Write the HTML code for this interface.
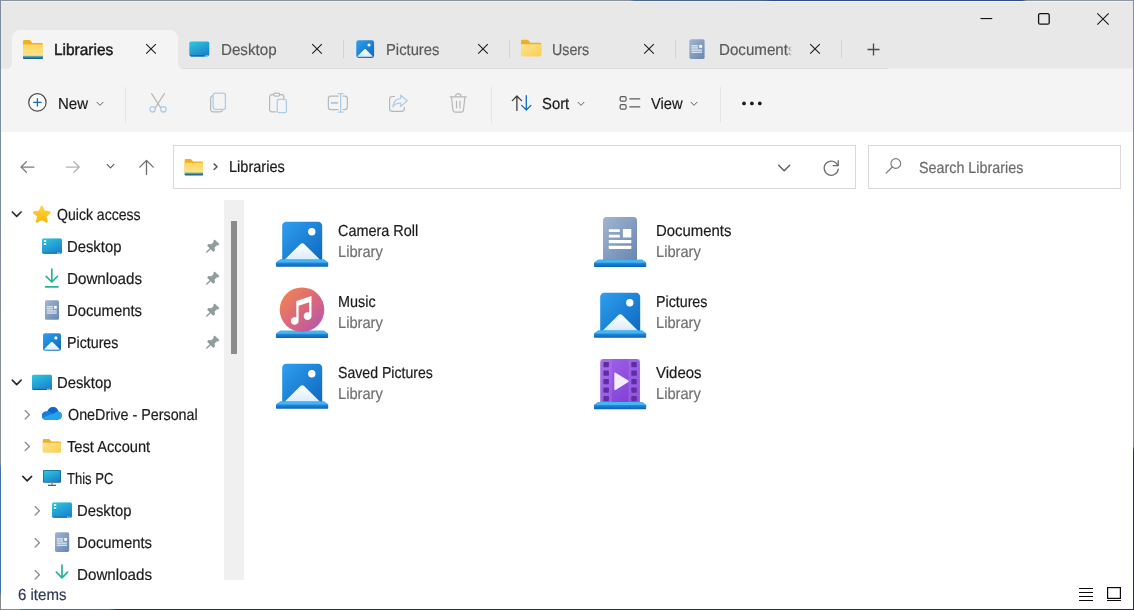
<!DOCTYPE html>
<html>
<head>
<meta charset="utf-8">
<title>Libraries</title>
<style>
*{box-sizing:border-box;margin:0;padding:0}
html,body{width:1134px;height:610px;overflow:hidden;background:#fff}
body{font-family:"Liberation Sans",sans-serif;color:#1b1b1b;position:relative;font-size:15px}
.abs{position:absolute}
svg{position:absolute;overflow:visible}
.t{position:absolute;white-space:nowrap;line-height:20px;transform-origin:0 50%;-webkit-text-stroke:0.200px currentColor;text-rendering:geometricPrecision}
.sep{position:absolute;width:1px;background:#d8d8d8}
.box{position:absolute;border:1px solid #d9d9d9;background:#fff}
</style>
</head>
<body>
<!-- defs -->
<svg width="0" height="0" style="left:0;top:0">
<defs>
<linearGradient id="gFold" x1="0" y1="0" x2="0" y2="1"><stop offset="0" stop-color="#ffd65c"/><stop offset="1" stop-color="#fbe391"/></linearGradient>
<linearGradient id="gFoldB" x1="0" y1="0" x2="1" y2="1"><stop offset="0" stop-color="#fde391"/><stop offset="1" stop-color="#fbce50"/></linearGradient>
<linearGradient id="gBase" x1="0" y1="0" x2="0" y2="1"><stop offset="0" stop-color="#8fc08a"/><stop offset="0.400" stop-color="#3a98b4"/><stop offset="0.750" stop-color="#1a64a2"/><stop offset="1" stop-color="#175c98"/></linearGradient>
<linearGradient id="gDesk" x1="0.200" y1="0" x2="0.800" y2="1"><stop offset="0" stop-color="#2fc3dc"/><stop offset="1" stop-color="#177fce"/></linearGradient>
<linearGradient id="gPic" x1="0" y1="0" x2="1" y2="1"><stop offset="0" stop-color="#2e9fee"/><stop offset="1" stop-color="#0e68bf"/></linearGradient>
<linearGradient id="gDoc" x1="0" y1="0" x2="1" y2="1"><stop offset="0" stop-color="#a2b5cf"/><stop offset="1" stop-color="#6686b4"/></linearGradient>
<linearGradient id="gLibBase" x1="0" y1="0" x2="0" y2="1"><stop offset="0.350" stop-color="#2390e2"/><stop offset="1" stop-color="#0c61ba"/></linearGradient>
<linearGradient id="gMus" x1="0" y1="0" x2="1" y2="1"><stop offset="0" stop-color="#f28a4a"/><stop offset="0.55" stop-color="#d9667e"/><stop offset="1" stop-color="#a855b8"/></linearGradient>
<linearGradient id="gVid" x1="0" y1="0" x2="1" y2="1"><stop offset="0" stop-color="#a465ee"/><stop offset="1" stop-color="#7a3ad0"/></linearGradient>
<linearGradient id="gMtn" x1="0" y1="0" x2="0" y2="1"><stop offset="0" stop-color="#ffffff"/><stop offset="1" stop-color="#d9ebfa"/></linearGradient>

</defs>
</svg>
<!-- chrome -->
<div class="abs" style="left:0;top:0;width:1134px;height:69px;background:#e8e8e8"></div>
<div class="abs" style="left:0;top:69px;width:1134px;height:63px;background:#f4f4f4"></div>
<div class="abs" style="left:888px;top:68px;width:246px;height:1px;background:#eeeeee"></div>
<div class="abs" style="left:178px;top:68px;width:710px;height:1px;background:#dcdcdc"></div>
<div class="abs" style="left:12px;top:30px;width:166px;height:39px;background:#f4f4f4;border-radius:8px 8px 0 0"></div>
<div class="abs" style="left:7px;top:64px;width:5px;height:5px;background:radial-gradient(circle at 0 0, rgba(244,244,244,0) 4.500px, #f4f4f4 5px)"></div>
<div class="abs" style="left:178px;top:64px;width:5px;height:5px;background:radial-gradient(circle at 100% 0, rgba(244,244,244,0) 4.500px, #f4f4f4 5px)"></div>
<!-- window controls -->



<!-- tabs -->
<span class="t" style="left:54.3px;top:41px;font-size:16px;color:#1a1a1a;transform:scaleX(0.9648);-webkit-text-stroke:0.450px #1a1a1a;">Libraries</span><span class="t" style="left:220.6px;top:41px;font-size:16px;color:#5a5a5a;transform:scaleX(0.9471);">Desktop</span><span class="t" style="left:386.4px;top:41px;font-size:16px;color:#5a5a5a;transform:scaleX(0.9239);">Pictures</span><span class="t" style="left:552.2px;top:41px;font-size:16px;color:#5a5a5a;transform:scaleX(0.8904);">Users</span><div class="abs" style="left:715px;top:38px;width:76.500px;height:24px;overflow:hidden;-webkit-mask-image:linear-gradient(90deg,#000 93%,transparent 100%);mask-image:linear-gradient(90deg,#000 93%,transparent 100%)"><span class="t" style="left:3.6px;top:3px;font-size:16px;color:#5a5a5a;transform:scaleX(0.9454);">Documents</span></div><div class="sep" style="left:343px;top:40px;height:18px;background:#d2d2d2"></div><div class="sep" style="left:509px;top:40px;height:18px;background:#d2d2d2"></div><div class="sep" style="left:675px;top:40px;height:18px;background:#d2d2d2"></div><div class="sep" style="left:841px;top:40px;height:18px;background:#d2d2d2"></div>
<!-- toolbar -->
<span class="t" style="left:58.2px;top:95px;font-size:16px;color:#1a1a1a;transform:scaleX(0.9370);">New</span><div class="sep" style="left:125px;top:87px;height:36px;background:#e4e4e4"></div><div class="sep" style="left:491px;top:87px;height:36px;background:#e4e4e4"></div><span class="t" style="left:541.8px;top:95px;font-size:16px;color:#1a1a1a;transform:scaleX(0.9269);">Sort</span><span class="t" style="left:650.6px;top:95px;font-size:16px;color:#1a1a1a;transform:scaleX(0.9189);">View</span><div class="sep" style="left:720px;top:87px;height:36px;background:#e4e4e4"></div>
<!-- address -->
<div class="box" style="left:173px;top:145px;width:683px;height:44px"></div><span class="t" style="left:229px;top:158px;font-size:16px;color:#1a1a1a;transform:scaleX(0.9094);">Libraries</span><div class="box" style="left:868px;top:145px;width:253px;height:44px"></div><span class="t" style="left:919px;top:159px;font-size:16px;color:#6b6b6b;transform:scaleX(0.8953);">Search Libraries</span>
<!-- sidebar -->
<span class="t" style="left:56.8px;top:206px;font-size:16px;color:#1b1b1b;transform:scaleX(0.8787);">Quick access</span><span class="t" style="left:67.4px;top:238px;font-size:16px;color:#1b1b1b;transform:scaleX(0.9267);">Desktop</span><span class="t" style="left:67.4px;top:270px;font-size:16px;color:#1b1b1b;transform:scaleX(0.9475);">Downloads</span><span class="t" style="left:67.4px;top:302px;font-size:16px;color:#1b1b1b;transform:scaleX(0.9268);">Documents</span><span class="t" style="left:67px;top:334px;font-size:16px;color:#1b1b1b;transform:scaleX(0.8893);">Pictures</span><span class="t" style="left:57.4px;top:374px;font-size:16px;color:#1b1b1b;transform:scaleX(0.9267);">Desktop</span><span class="t" style="left:67.7px;top:406px;font-size:16px;color:#1b1b1b;transform:scaleX(0.8948);">OneDrive - Personal</span><span class="t" style="left:67.3px;top:438px;font-size:16px;color:#1b1b1b;transform:scaleX(0.9171);">Test Account</span><span class="t" style="left:67.4px;top:470px;font-size:16px;color:#1b1b1b;transform:scaleX(0.8154);">This PC</span><span class="t" style="left:77.4px;top:502px;font-size:16px;color:#1b1b1b;transform:scaleX(0.9267);">Desktop</span><span class="t" style="left:77.4px;top:534px;font-size:16px;color:#1b1b1b;transform:scaleX(0.9268);">Documents</span><span class="t" style="left:77.4px;top:566px;font-size:16px;color:#1b1b1b;transform:scaleX(0.9475);">Downloads</span><div class="abs" style="left:224px;top:200px;width:20px;height:380px;background:#f0f0f0"></div><div class="abs" style="left:231px;top:221px;width:6px;height:133px;background:#8b8b8b"></div><div class="abs" style="left:0;top:580px;width:1134px;height:30px;background:#fff"></div>
<!-- content -->
<span class="t" style="left:338px;top:222px;font-size:16px;color:#1b1b1b;transform:scaleX(0.9019);">Camera Roll</span><span class="t" style="left:338px;top:243px;font-size:16px;color:#707070;transform:scaleX(0.9160);">Library</span><span class="t" style="left:337.7px;top:293px;font-size:16px;color:#1b1b1b;transform:scaleX(0.8999);">Music</span><span class="t" style="left:338px;top:314px;font-size:16px;color:#707070;transform:scaleX(0.9160);">Library</span><span class="t" style="left:338px;top:364px;font-size:16px;color:#1b1b1b;transform:scaleX(0.8810);">Saved Pictures</span><span class="t" style="left:338px;top:385px;font-size:16px;color:#707070;transform:scaleX(0.9160);">Library</span><span class="t" style="left:656px;top:222px;font-size:16px;color:#1b1b1b;transform:scaleX(0.9318);">Documents</span><span class="t" style="left:656.2px;top:243px;font-size:16px;color:#707070;transform:scaleX(0.9160);">Library</span><span class="t" style="left:656px;top:293px;font-size:16px;color:#1b1b1b;transform:scaleX(0.8893);">Pictures</span><span class="t" style="left:656.2px;top:314px;font-size:16px;color:#707070;transform:scaleX(0.9160);">Library</span><span class="t" style="left:656px;top:364px;font-size:16px;color:#1b1b1b;transform:scaleX(0.9375);">Videos</span><span class="t" style="left:656.2px;top:385px;font-size:16px;color:#707070;transform:scaleX(0.9160);">Library</span>
<!-- status -->
<span class="t" style="left:18px;top:586px;font-size:16px;color:#2f3b55;transform:scaleX(0.9384);">6 items</span>
<!-- icons -->
<svg style="left:0;top:0;pointer-events:none" width="1134" height="610" viewBox="0 0 1134 610">
<svg x="980.500" y="18" width="12" height="2" overflow="visible"><path d="M0 .55h11.800" stroke="#111" stroke-width="1.100"/></svg>
<svg x="1038" y="13" width="12" height="12" overflow="visible"><rect x=".6" y=".6" width="10.600" height="10.600" rx="1.500" fill="none" stroke="#111" stroke-width="1.300"/></svg>
<svg x="1097" y="13" width="12" height="12" overflow="visible"><path d="M.3.300l11.400 11.400M11.700.3L.3 11.700" stroke="#1a1a1a" stroke-width="1.100" fill="none"/></svg>
<svg x="23" y="40" width="20" height="19" overflow="visible" ><svg width="20" height="19" viewBox="0 0 20 19" preserveAspectRatio="none" overflow="visible"><path d="M0 1.600C0 .7.700 0 1.600 0h4.600c.5 0 1 .2 1.300.6L9.300 3H18.600c.8 0 1.400.6 1.400 1.400V16H0z" fill="#efb021"/>
 <path d="M0 4.400h20V16H0z" fill="url(#gFold)"/>
 <path d="M0 15.700h20v2.500c0 .4-.3.800-.8.800H.8c-.5 0-.8-.4-.8-.8z" fill="url(#gBase)"/></svg></svg>
<svg x="145.9" y="43.8" width="10.2" height="10.2" overflow="visible" ><svg width="10.2" height="10.2" viewBox="0 0 10 10" overflow="visible"><path d="M.3.300l9.400 9.400M9.700.3L.3 9.700" stroke="#1a1a1a" stroke-width="1.050" fill="none"/></svg></svg>
<svg x="189.3" y="41.4" width="20" height="15" overflow="visible" ><svg width="20" height="15" viewBox="0 0 20 15" preserveAspectRatio="none" overflow="visible"><rect x="0" y="0" width="20" height="15" rx="1.800" fill="url(#gDesk)"/><path d="M.3 13.900H15.200V15H1.800C1 15 .5 14.600.3 13.900z" fill="#0d639f"/><rect x="16.200" y="13.800" width="1" height="1.200" fill="#e8f4ff" opacity=".85"/><rect x="18" y="13.800" width="1" height="1.200" fill="#e8f4ff" opacity=".85"/></svg></svg>
<svg x="311.9" y="43.8" width="10.2" height="10.2" overflow="visible" ><svg width="10.2" height="10.2" viewBox="0 0 10 10" overflow="visible"><path d="M.3.300l9.400 9.400M9.700.3L.3 9.700" stroke="#1a1a1a" stroke-width="1.050" fill="none"/></svg></svg>
<svg x="356.3" y="40.3" width="17.8" height="17.6" overflow="visible" ><svg width="17.8" height="17.6" viewBox="0 0 18 18" preserveAspectRatio="none" overflow="visible"><rect x="0" y="0" width="18" height="18" rx="2.200" fill="url(#gPic)"/>
 <path d="M1.200 16.200 8 9.300c.5-.5 1.200-.5 1.700 0l6.900 6.900c-.2.400-.6.600-1.100.6H2.300c-.5 0-.9-.2-1.100-.6z" fill="url(#gMtn)"/>
 <circle cx="12.900" cy="4.800" r="1.600" fill="#fff"/></svg></svg>
<svg x="477.9" y="43.8" width="10.2" height="10.2" overflow="visible" ><svg width="10.2" height="10.2" viewBox="0 0 10 10" overflow="visible"><path d="M.3.300l9.400 9.400M9.700.3L.3 9.700" stroke="#1a1a1a" stroke-width="1.050" fill="none"/></svg></svg>
<svg x="521" y="39.8" width="20.2" height="16.6" overflow="visible" ><svg width="20.2" height="16.6" viewBox="0 0 20 17" preserveAspectRatio="none" overflow="visible"><path d="M0 1.600C0 .7.700 0 1.600 0h4.600c.5 0 1 .2 1.300.6L9.300 3H18.600c.8 0 1.400.6 1.400 1.400V15H0z" fill="#efb021"/>
 <path d="M0 4.500h20V15.600c0 .8-.6 1.400-1.400 1.400H1.400C.6 17 0 16.400 0 15.600z" fill="url(#gFoldB)"/></svg></svg>
<svg x="643.9" y="43.8" width="10.2" height="10.2" overflow="visible" ><svg width="10.2" height="10.2" viewBox="0 0 10 10" overflow="visible"><path d="M.3.300l9.400 9.400M9.700.3L.3 9.700" stroke="#1a1a1a" stroke-width="1.050" fill="none"/></svg></svg>
<svg x="689.4" y="39.2" width="15.2" height="19.8" overflow="visible" ><svg width="15.2" height="19.8" viewBox="0 0 15 20" preserveAspectRatio="none" overflow="visible"><rect x="0" y="0" width="15" height="20" rx="1.700" fill="url(#gDoc)"/>
 <rect x="1.900" y="6.200" width="6.600" height="1.050" fill="#fff" opacity=".95"/>
 <rect x="1.900" y="8.300" width="6.600" height="1.050" fill="#fff" opacity=".95"/>
 <rect x="9.700" y="5.800" width="2.900" height="2.900" fill="#fff" opacity=".95"/>
 <rect x="1.900" y="10.450" width="10.700" height="1.050" fill="#fff" opacity=".95"/>
 <rect x="1.900" y="12.600" width="10.700" height="1.050" fill="#fff" opacity=".95"/></svg></svg>
<svg x="809.9" y="43.8" width="10.2" height="10.2" overflow="visible" ><svg width="10.2" height="10.2" viewBox="0 0 10 10" overflow="visible"><path d="M.3.300l9.400 9.400M9.700.3L.3 9.700" stroke="#1a1a1a" stroke-width="1.050" fill="none"/></svg></svg>
<svg x="867" y="43" width="13" height="13" overflow="visible"><path d="M6.500.5v12M.5 6.500h12" stroke="#4a4a4a" stroke-width="1.350" fill="none"/></svg>
<svg x="28" y="93" width="19" height="19" overflow="visible"><circle cx="9.400" cy="9.400" r="8.700" fill="#fafafa" stroke="#4a4a4a" stroke-width="1.200"/><path d="M9.400 5.200v8.400M5.200 9.400h8.400" stroke="#0f6cbd" stroke-width="1.300" fill="none"/></svg>
<svg x="96" y="101.3" width="8" height="5" overflow="visible" ><svg width="8" height="5" viewBox="0 0 8 5" overflow="visible"><path d="M1 1 4 4 7 1" stroke="#606060" stroke-width="1" fill="none" stroke-linecap="round" stroke-linejoin="round"/></svg></svg>
<svg x="149" y="93" width="18" height="20" overflow="visible" viewBox="0 0 18 20">
<path d="M2.600 .6 11.600 14.600M15.400 .6 6.400 14.600" stroke="#b7b7b7" stroke-width="1.200" fill="none" stroke-linecap="round"/>
<circle cx="3.600" cy="16.300" r="2.700" fill="none" stroke="#a9cdea" stroke-width="1.300"/>
<circle cx="14.400" cy="16.300" r="2.700" fill="none" stroke="#a9cdea" stroke-width="1.300"/></svg>
<svg x="210" y="92.500" width="16" height="20" overflow="visible" viewBox="0 0 16 20">
<path d="M2.800 3.400C1.500 3.600.6 4.600.6 5.900v10.300c0 1.800 1.500 3.200 3.200 3.200h6.300c1.300 0 2.300-.8 2.600-2" stroke="#b7b7b7" stroke-width="1.200" fill="none" stroke-linecap="round"/>
<rect x="3.100" y=".6" width="12.300" height="16.300" rx="2.200" fill="none" stroke="#a9cdea" stroke-width="1.300"/></svg>
<svg x="269" y="92.500" width="18" height="21" overflow="visible" viewBox="0 0 18 21">
<path d="M6.600 19.400H2.800c-1.200 0-2.200-1-2.200-2.200V4.400c0-1.200 1-2.200 2.200-2.200h1.800M10.800 2.200h1.800c1.200 0 2.200 1 2.200 2.200v1.600" stroke="#b7b7b7" stroke-width="1.200" fill="none" stroke-linecap="round"/>
<rect x="4.600" y=".6" width="6.200" height="3" rx="1.500" fill="none" stroke="#b7b7b7" stroke-width="1.200"/>
<rect x="8.200" y="6.800" width="9.200" height="13.400" rx="1.800" fill="none" stroke="#a9cdea" stroke-width="1.300"/></svg>
<svg x="327.800" y="93" width="20.300" height="20" overflow="visible" viewBox="0 0 21 20" preserveAspectRatio="none">
<path d="M10.600 3.200H3.200C1.800 3.200.6 4.400.6 5.800v8.200c0 1.400 1.200 2.600 2.600 2.600h7.400M16 3.200h1.600c1.400 0 2.600 1.200 2.600 2.600v8.200c0 1.400-1.200 2.600-2.600 2.600H16" stroke="#b7b7b7" stroke-width="1.200" fill="none" stroke-linecap="round"/>
<path d="M10.800 .6h5M10.800 19.200h5M13.300 .6v18.600" stroke="#a9cdea" stroke-width="1.300" fill="none" stroke-linecap="round"/>
<path d="M3 9.900h7.600" stroke="#a9cdea" stroke-width="2" fill="none"/></svg>
<svg x="389" y="94.500" width="19" height="17.500" overflow="visible" viewBox="0 0 19 17.500">
<path d="M5.600 2H3.400C1.900 2 .6 3.300.6 4.800v9.200c0 1.500 1.300 2.800 2.800 2.800h9.200c1.500 0 2.800-1.300 2.800-2.800v-1.200" stroke="#b7b7b7" stroke-width="1.200" fill="none" stroke-linecap="round"/>
<path d="M11.600 .7 18.200 6.300 11.600 11.900V8.700C8.100 8.500 5.600 9.700 3.900 12.300 4.300 7.500 7 4.500 11.600 3.900z" stroke="#a9cdea" stroke-width="1.300" fill="none" stroke-linejoin="round"/></svg>
<svg x="449.500" y="93" width="18" height="20" overflow="visible" viewBox="0 0 18 20">
<path d="M.6 3.800h16.200M6 3.600C6 2 7.200.7 8.700.7s2.700 1.300 2.700 2.900M2 4l1.400 13c.2 1.300 1.100 2.200 2.400 2.200h5.800c1.300 0 2.200-.9 2.400-2.200l1.400-13M7 8.200v6.600M10.400 8.200v6.600" stroke="#b7b7b7" stroke-width="1.200" fill="none" stroke-linecap="round"/></svg>
<svg x="511.500" y="95" width="21" height="16" overflow="visible" viewBox="0 0 21 16">
<path d="M5.400 15.400V1M.8 5.600 5.400 1 10 5.600" stroke="#3c3c3c" stroke-width="1.300" fill="none" stroke-linecap="round" stroke-linejoin="round"/>
<path d="M14.800 .6V15M10.200 10.400 14.800 15 19.400 10.400" stroke="#0f6cbd" stroke-width="1.300" fill="none" stroke-linecap="round" stroke-linejoin="round"/></svg>
<svg x="577" y="101.3" width="8" height="5" overflow="visible" ><svg width="8" height="5" viewBox="0 0 8 5" overflow="visible"><path d="M1 1 4 4 7 1" stroke="#606060" stroke-width="1" fill="none" stroke-linecap="round" stroke-linejoin="round"/></svg></svg>
<svg x="619.500" y="96" width="21" height="14" overflow="visible" viewBox="0 0 21 14">
<rect x=".6" y=".6" width="6" height="4.600" rx="1.500" fill="none" stroke="#5a5a5a" stroke-width="1.200"/>
<rect x=".6" y="8.600" width="6" height="4.600" rx="1.500" fill="none" stroke="#5a5a5a" stroke-width="1.200"/>
<path d="M10.400 2.900h9.800M10.400 10.900h9.800" stroke="#5a5a5a" stroke-width="1.300" stroke-linecap="round"/></svg>
<svg x="690" y="101.3" width="8" height="5" overflow="visible" ><svg width="8" height="5" viewBox="0 0 8 5" overflow="visible"><path d="M1 1 4 4 7 1" stroke="#606060" stroke-width="1" fill="none" stroke-linecap="round" stroke-linejoin="round"/></svg></svg>
<svg x="742" y="101.400" width="20" height="4" overflow="visible"><circle cx="2" cy="2" r="1.850" fill="#1a1a1a"/><circle cx="9.900" cy="2" r="1.850" fill="#1a1a1a"/><circle cx="17.800" cy="2" r="1.850" fill="#1a1a1a"/></svg>
<svg x="20" y="161" width="14.500" height="12" overflow="visible" viewBox="0 0 14.500 12"><path d="M14 6H1M6.400 .7 1 6l5.400 5.300" stroke="#7c7c7c" stroke-width="1.250" fill="none" stroke-linecap="round" stroke-linejoin="round"/></svg>
<svg x="65.800" y="161" width="14.500" height="12" overflow="visible" viewBox="0 0 14.500 12"><path d="M.5 6h13M8.100 .7 13.500 6l-5.400 5.300" stroke="#b2b2b2" stroke-width="1.250" fill="none" stroke-linecap="round" stroke-linejoin="round"/></svg>
<svg x="106.500" y="163.800" width="8" height="4.600" overflow="visible" viewBox="0 0 8 4.600"><path d="M.6.600 4 4 7.400.6" stroke="#5e5e5e" stroke-width="1.150" fill="none" stroke-linecap="round" stroke-linejoin="round"/></svg>
<svg x="139" y="159.500" width="15" height="15.500" overflow="visible" viewBox="0 0 15 15.500"><path d="M7.500 15V1M.8 7.600 7.500 .9l6.700 6.700" stroke="#6c6c6c" stroke-width="1.300" fill="none" stroke-linecap="round" stroke-linejoin="round"/></svg>
<svg x="184.6" y="159" width="18.4" height="16.4" overflow="visible" ><svg width="18.4" height="16.4" viewBox="0 0 20 19" preserveAspectRatio="none" overflow="visible"><path d="M0 1.600C0 .7.700 0 1.600 0h4.600c.5 0 1 .2 1.300.6L9.300 3H18.600c.8 0 1.400.6 1.400 1.400V16H0z" fill="#efb021"/>
 <path d="M0 4.400h20V16H0z" fill="url(#gFold)"/>
 <path d="M0 15.700h20v2.500c0 .4-.3.800-.8.800H.8c-.5 0-.8-.4-.8-.8z" fill="url(#gBase)"/></svg></svg>
<svg x="213.200" y="163" width="5" height="7.400" overflow="visible" viewBox="0 0 5 7.400"><path d="M.9.900 3.900 3.700 .9 6.500" stroke="#555" stroke-width="1.450" fill="none" stroke-linecap="round" stroke-linejoin="round"/></svg>
<svg x="778" y="164.600" width="12.400" height="7" overflow="visible" viewBox="0 0 12.400 7"><path d="M.7.700 6.200 6.200 11.700.7" stroke="#585858" stroke-width="1.300" fill="none" stroke-linecap="round" stroke-linejoin="round"/></svg>
<svg x="823" y="159.400" width="17" height="16" overflow="visible" viewBox="0 0 17 16"><path d="M14.900 6.200A7.100 7.100 0 1 0 15.300 9.800" stroke="#6a6a6a" stroke-width="1.250" fill="none" stroke-linecap="round"/><path d="M15.200 1.200v5h-5" stroke="#6a6a6a" stroke-width="1.250" fill="none" stroke-linecap="round" stroke-linejoin="round"/></svg>
<svg x="885.500" y="157.800" width="16" height="16" overflow="visible" viewBox="0 0 16 16"><circle cx="10.300" cy="5.700" r="4.900" fill="none" stroke="#7a7a7a" stroke-width="1.150"/><path d="M6.800 9.200.7 15.300" stroke="#7a7a7a" stroke-width="1.200" stroke-linecap="round"/></svg>
<svg x="11.5" y="211.2" width="10.400" height="6" overflow="visible" viewBox="0 0 10.400 6"><path d="M.8.800 5.200 5.200 9.600.8" stroke="#2b2b2b" stroke-width="1.650" fill="none" stroke-linecap="round" stroke-linejoin="round"/></svg>
<svg x="32.600" y="205.200" width="18.400" height="17.800" overflow="visible" viewBox="0 0 18.400 17.800"><defs><linearGradient id="gStar" x1="0" y1="0" x2="0" y2="1"><stop offset="0" stop-color="#ffd43e"/><stop offset="1" stop-color="#f8b90f"/></linearGradient></defs><path d="M9.200 1.400 11.500 6.500 17 7.200 12.900 11 14 16.400 9.200 13.700 4.400 16.400 5.500 11 1.400 7.200 6.900 6.500z" fill="url(#gStar)" stroke="url(#gStar)" stroke-width="2.200" stroke-linejoin="round"/></svg>
<svg x="42" y="238.2" width="20" height="15.6" overflow="visible" viewBox="0 0 20 15.600"><defs><clipPath id="cpD658"><rect width="20" height="15.600" rx="1.800"/></clipPath></defs><g clip-path="url(#cpD658)"><rect width="20" height="15.600" fill="url(#gDesk)"/><rect x="0" y="14.500" width="20" height="1.100" fill="#0d639f"/><rect x="15.300" y="14.300" width="1.200" height="1.300" fill="#eef8ff"/><rect x="17.300" y="14.300" width="1" height="1.300" fill="#eef8ff"/></g><rect x="1.900" y="2" width="2.300" height="1.800" fill="#f2fcff"/><rect x="1.900" y="5" width="2.300" height="1.800" fill="#f2fcff"/><rect x="1.900" y="3.800" width="2.300" height=".5" fill="#1a7a9c" opacity=".6"/><rect x="1.900" y="6.800" width="2.300" height=".5" fill="#1a7a9c" opacity=".6"/></svg>
<svg x="206" y="239.4" width="13.500" height="13.500" overflow="visible" viewBox="0 0 13.500 13.500"><path d="M8.200.5c.3-.3.700-.3 1 0l3.800 3.800c.3.300.3.700 0 1l-.6.600c-.2.200-.5.300-.8.200l-.6-.2-2.300 2.300.2 2.300c0 .3-.1.600-.3.800l-.7.700c-.3.300-.7.300-1 0L4.700 9.800 1.100 13.400.1 13.400.1 12.400 3.700 8.800 1.500 6.600c-.3-.3-.3-.7 0-1l.7-.7c.2-.2.500-.3.800-.3l2.300.2 2.300-2.300-.2-.6c-.1-.3 0-.6.200-.8z" fill="#919c9c"/></svg>
<svg x="45" y="268.4" width="13.600" height="19.500" overflow="visible" viewBox="0 0 13.600 19.500"><path d="M6.800 .8V13.200M1.200 8 6.800 13.600 12.400 8" stroke="#27b39b" stroke-width="1.700" fill="none" stroke-linecap="round" stroke-linejoin="round"/><path d="M.6 18.500h12.400" stroke="#27b39b" stroke-width="1.600" stroke-linecap="round"/></svg>
<svg x="206" y="271.4" width="13.500" height="13.500" overflow="visible" viewBox="0 0 13.500 13.500"><path d="M8.200.5c.3-.3.700-.3 1 0l3.800 3.800c.3.300.3.700 0 1l-.6.600c-.2.200-.5.300-.8.200l-.6-.2-2.300 2.300.2 2.300c0 .3-.1.600-.3.800l-.7.700c-.3.300-.7.300-1 0L4.700 9.800 1.100 13.400.1 13.400.1 12.400 3.700 8.800 1.500 6.600c-.3-.3-.3-.7 0-1l.7-.7c.2-.2.500-.3.800-.3l2.300.2 2.300-2.300-.2-.6c-.1-.3 0-.6.200-.8z" fill="#919c9c"/></svg>
<svg x="45" y="300.2" width="14" height="19.6" overflow="visible" ><svg width="14" height="19.6" viewBox="0 0 15 20" preserveAspectRatio="none" overflow="visible"><rect x="0" y="0" width="15" height="20" rx="1.700" fill="url(#gDoc)"/>
 <rect x="1.900" y="6.200" width="6.600" height="1.050" fill="#fff" opacity=".95"/>
 <rect x="1.900" y="8.300" width="6.600" height="1.050" fill="#fff" opacity=".95"/>
 <rect x="9.700" y="5.800" width="2.900" height="2.900" fill="#fff" opacity=".95"/>
 <rect x="1.900" y="10.450" width="10.700" height="1.050" fill="#fff" opacity=".95"/>
 <rect x="1.900" y="12.600" width="10.700" height="1.050" fill="#fff" opacity=".95"/></svg></svg>
<svg x="206" y="303.4" width="13.500" height="13.500" overflow="visible" viewBox="0 0 13.500 13.500"><path d="M8.200.5c.3-.3.700-.3 1 0l3.800 3.800c.3.300.3.700 0 1l-.6.600c-.2.200-.5.300-.8.200l-.6-.2-2.300 2.300.2 2.300c0 .3-.1.600-.3.800l-.7.700c-.3.300-.7.300-1 0L4.700 9.800 1.100 13.400.1 13.400.1 12.400 3.700 8.800 1.500 6.600c-.3-.3-.3-.7 0-1l.7-.7c.2-.2.500-.3.800-.3l2.300.2 2.300-2.300-.2-.6c-.1-.3 0-.6.200-.8z" fill="#919c9c"/></svg>
<svg x="43" y="333.2" width="18" height="17.6" overflow="visible" ><svg width="18" height="17.6" viewBox="0 0 18 18" preserveAspectRatio="none" overflow="visible"><rect x="0" y="0" width="18" height="18" rx="2.200" fill="url(#gPic)"/>
 <path d="M1.200 16.200 8 9.300c.5-.5 1.200-.5 1.700 0l6.900 6.900c-.2.400-.6.600-1.100.6H2.300c-.5 0-.9-.2-1.100-.6z" fill="url(#gMtn)"/>
 <circle cx="12.900" cy="4.800" r="1.600" fill="#fff"/></svg></svg>
<svg x="206" y="335.4" width="13.500" height="13.500" overflow="visible" viewBox="0 0 13.500 13.500"><path d="M8.200.5c.3-.3.700-.3 1 0l3.800 3.800c.3.300.3.700 0 1l-.6.600c-.2.200-.5.300-.8.200l-.6-.2-2.300 2.300.2 2.300c0 .3-.1.600-.3.800l-.7.700c-.3.300-.7.300-1 0L4.700 9.800 1.100 13.400.1 13.400.1 12.400 3.700 8.800 1.500 6.600c-.3-.3-.3-.7 0-1l.7-.7c.2-.2.500-.3.800-.3l2.300.2 2.300-2.300-.2-.6c-.1-.3 0-.6.200-.8z" fill="#919c9c"/></svg>
<svg x="11.5" y="379.4" width="10.400" height="6" overflow="visible" viewBox="0 0 10.400 6"><path d="M.8.800 5.200 5.200 9.600.8" stroke="#2b2b2b" stroke-width="1.650" fill="none" stroke-linecap="round" stroke-linejoin="round"/></svg>
<svg x="32" y="374.4" width="20" height="15.6" overflow="visible" viewBox="0 0 20 15.600"><defs><clipPath id="cpD694"><rect width="20" height="15.600" rx="1.800"/></clipPath></defs><g clip-path="url(#cpD694)"><rect width="20" height="15.600" fill="url(#gDesk)"/><rect x="0" y="14.500" width="20" height="1.100" fill="#0d639f"/><rect x="15.300" y="14.300" width="1.200" height="1.300" fill="#eef8ff"/><rect x="17.300" y="14.300" width="1" height="1.300" fill="#eef8ff"/></g></svg>
<svg x="24.4" y="409.8" width="6" height="10" overflow="visible" viewBox="0 0 6 10"><path d="M.8.800 5 5 .8 9.200" stroke="#8e8e8e" stroke-width="1.350" fill="none" stroke-linecap="round" stroke-linejoin="round"/></svg>
<svg x="41.900" y="406.900" width="20" height="12.900" overflow="visible" viewBox="0 0 20 12.900">
<defs><clipPath id="cpCloud"><path d="M4 12.900C1.600 12.900 0 11.100 0 8.900 0 6.500 1.800 4.700 4.100 4.700c.4 0 .8 0 1.200.1C6.200 2 8.400 0 11.100 0c2.800 0 5 2 5.400 4.700C18.500 4.900 20 6.600 20 8.700c0 2.300-1.800 4.200-4.100 4.200z"/></clipPath></defs>
<g clip-path="url(#cpCloud)">
<rect width="20" height="13" fill="#0b68cc"/>
<path d="M-1 5 4.500 3.500 8.500 5.200 11.500 8.500 4 14-1 14z" fill="#1580d9"/>
<path d="M-1 11.500 6 8.600 12.500 6.200 16.500 4.200 21 5.500V14H-1z" fill="#27a2ea"/>
</g></svg>
<svg x="24.4" y="441.4" width="6" height="10" overflow="visible" viewBox="0 0 6 10"><path d="M.8.800 5 5 .8 9.200" stroke="#8e8e8e" stroke-width="1.350" fill="none" stroke-linecap="round" stroke-linejoin="round"/></svg>
<svg x="42.8" y="439" width="18.2" height="13.8" overflow="visible" ><svg width="18.2" height="13.8" viewBox="0 0 20 17" preserveAspectRatio="none" overflow="visible"><path d="M0 1.600C0 .7.700 0 1.600 0h4.600c.5 0 1 .2 1.300.6L9.300 3H18.600c.8 0 1.400.6 1.400 1.400V15H0z" fill="#efb021"/>
 <path d="M0 4.500h20V15.600c0 .8-.6 1.400-1.400 1.400H1.400C.6 17 0 16.400 0 15.600z" fill="url(#gFoldB)"/></svg></svg>
<svg x="22" y="475.6" width="10.400" height="6" overflow="visible" viewBox="0 0 10.400 6"><path d="M.8.800 5.200 5.200 9.600.8" stroke="#2b2b2b" stroke-width="1.650" fill="none" stroke-linecap="round" stroke-linejoin="round"/></svg>
<svg x="43" y="470" width="18" height="16" overflow="visible" viewBox="0 0 18 16">
<rect x="0" y="0" width="18" height="12.800" rx=".8" fill="#19688f"/>
<rect x=".8" y=".8" width="16.400" height="11.200" rx=".3" fill="url(#gDesk)"/>
<path d="M8.200 12.800h1.700v2H8.200z" fill="#8b9ba9"/><path d="M5 14.700h7.900v1.200H5z" fill="#4a4a4a"/></svg>
<svg x="34.4" y="505.8" width="6" height="10" overflow="visible" viewBox="0 0 6 10"><path d="M.8.800 5 5 .8 9.200" stroke="#8e8e8e" stroke-width="1.350" fill="none" stroke-linecap="round" stroke-linejoin="round"/></svg>
<svg x="52" y="502.2" width="20" height="15.6" overflow="visible" viewBox="0 0 20 15.600"><defs><clipPath id="cpD1022"><rect width="20" height="15.600" rx="1.800"/></clipPath></defs><g clip-path="url(#cpD1022)"><rect width="20" height="15.600" fill="url(#gDesk)"/><rect x="0" y="14.500" width="20" height="1.100" fill="#0d639f"/><rect x="15.300" y="14.300" width="1.200" height="1.300" fill="#eef8ff"/><rect x="17.300" y="14.300" width="1" height="1.300" fill="#eef8ff"/></g><rect x="1.900" y="2" width="2.300" height="1.800" fill="#f2fcff"/><rect x="1.900" y="5" width="2.300" height="1.800" fill="#f2fcff"/><rect x="1.900" y="3.800" width="2.300" height=".5" fill="#1a7a9c" opacity=".6"/><rect x="1.900" y="6.800" width="2.300" height=".5" fill="#1a7a9c" opacity=".6"/></svg>
<svg x="34.4" y="537.8" width="6" height="10" overflow="visible" viewBox="0 0 6 10"><path d="M.8.800 5 5 .8 9.200" stroke="#8e8e8e" stroke-width="1.350" fill="none" stroke-linecap="round" stroke-linejoin="round"/></svg>
<svg x="55" y="532.3" width="14.2" height="19.7" overflow="visible" ><svg width="14.2" height="19.7" viewBox="0 0 15 20" preserveAspectRatio="none" overflow="visible"><rect x="0" y="0" width="15" height="20" rx="1.700" fill="url(#gDoc)"/>
 <rect x="1.900" y="6.200" width="6.600" height="1.050" fill="#fff" opacity=".95"/>
 <rect x="1.900" y="8.300" width="6.600" height="1.050" fill="#fff" opacity=".95"/>
 <rect x="9.700" y="5.800" width="2.900" height="2.900" fill="#fff" opacity=".95"/>
 <rect x="1.900" y="10.450" width="10.700" height="1.050" fill="#fff" opacity=".95"/>
 <rect x="1.900" y="12.600" width="10.700" height="1.050" fill="#fff" opacity=".95"/></svg></svg>
<svg x="34.4" y="569.8" width="6" height="10" overflow="visible" viewBox="0 0 6 10"><path d="M.8.800 5 5 .8 9.200" stroke="#8e8e8e" stroke-width="1.350" fill="none" stroke-linecap="round" stroke-linejoin="round"/></svg>
<svg x="55.2" y="564.2" width="13.600" height="19.500" overflow="visible" viewBox="0 0 13.600 19.500"><path d="M6.800 .8V13.200M1.200 8 6.800 13.600 12.400 8" stroke="#27b39b" stroke-width="1.700" fill="none" stroke-linecap="round" stroke-linejoin="round"/></svg>
<svg x="282.2" y="221.8" width="40" height="39" overflow="visible" viewBox="0 0 40 39"><path d="M4 0h32c2.200 0 4 1.800 4 4v35H0V4c0-2.200 1.800-4 4-4z" fill="url(#gPic)"/><path d="M1.600 38.600 18.300 22.200c1-1 2.600-1 3.600 0L38.600 38.600z" fill="url(#gMtn)"/><circle cx="29.600" cy="9.900" r="3.700" fill="#fff"/></svg>
<svg x="276" y="259.6" width="52.2" height="7.2" overflow="visible" viewBox="0 0 52.200 7.200" preserveAspectRatio="none"><path d="M4.200 0H48L52.200 3V6.200c0 .6-.4 1-1 1H1c-.6 0-1-.4-1-1V3z" fill="url(#gLibBase)"/><path d="M4.200 0H48L52.200 3H0z" fill="#45b5f2"/></svg>
<svg x="275.9" y="330.8" width="52.2" height="7.2" overflow="visible" viewBox="0 0 52.200 7.200" preserveAspectRatio="none"><path d="M4.200 0H48L52.200 3V6.200c0 .6-.4 1-1 1H1c-.6 0-1-.4-1-1V3z" fill="url(#gLibBase)"/><path d="M4.200 0H48L52.200 3H0z" fill="#45b5f2"/></svg>
<svg x="279.7" y="287.4" width="44.600" height="44.600" overflow="visible" viewBox="0 0 44.600 44.600"><circle cx="22.300" cy="22.300" r="22.300" fill="url(#gMus)"/><path d="M16.600 13.700 31.800 8.500V28.600a3.900 3.900 0 1 1-2.300-3.500V14.800L18.900 18.400V33.500a3.900 3.900 0 1 1-2.300-3.500z" fill="#fff"/></svg>
<svg x="282.2" y="363.8" width="40" height="39" overflow="visible" viewBox="0 0 40 39"><path d="M4 0h32c2.200 0 4 1.800 4 4v35H0V4c0-2.200 1.800-4 4-4z" fill="url(#gPic)"/><path d="M1.600 38.600 18.300 22.200c1-1 2.600-1 3.600 0L38.600 38.600z" fill="url(#gMtn)"/><circle cx="29.600" cy="9.900" r="3.700" fill="#fff"/></svg>
<svg x="276" y="401.6" width="52.2" height="7.2" overflow="visible" viewBox="0 0 52.200 7.200" preserveAspectRatio="none"><path d="M4.200 0H48L52.200 3V6.200c0 .6-.4 1-1 1H1c-.6 0-1-.4-1-1V3z" fill="url(#gLibBase)"/><path d="M4.200 0H48L52.200 3H0z" fill="#45b5f2"/></svg>
<svg x="603" y="217.1" width="34" height="44" overflow="visible" viewBox="0 0 34 44"><path d="M3.200 0h27.600c1.800 0 3.200 1.400 3.200 3.200V44H0V3.200C0 1.400 1.400 0 3.200 0z" fill="url(#gDoc)"/><rect x="5.800" y="12.100" width="11" height="2.900" rx=".4" fill="#fff"/><rect x="5.800" y="17.600" width="11" height="2.900" rx=".4" fill="#fff"/><rect x="19.900" y="11.800" width="8.400" height="8.700" rx=".6" fill="#fff"/><rect x="5.800" y="23" width="22.500" height="3.100" rx=".4" fill="#fff"/><rect x="5.800" y="28.700" width="22.500" height="3.100" rx=".4" fill="#fff"/></svg>
<svg x="594" y="259.7" width="52.2" height="7.2" overflow="visible" viewBox="0 0 52.200 7.200" preserveAspectRatio="none"><path d="M4.200 0H48L52.200 3V6.200c0 .6-.4 1-1 1H1c-.6 0-1-.4-1-1V3z" fill="url(#gLibBase)"/><path d="M4.200 0H48L52.200 3H0z" fill="#45b5f2"/></svg>
<svg x="600.2" y="292.8" width="40" height="39" overflow="visible" viewBox="0 0 40 39"><path d="M4 0h32c2.200 0 4 1.800 4 4v35H0V4c0-2.200 1.800-4 4-4z" fill="url(#gPic)"/><path d="M1.600 38.600 18.300 22.200c1-1 2.600-1 3.600 0L38.600 38.600z" fill="url(#gMtn)"/><circle cx="29.600" cy="9.900" r="3.700" fill="#fff"/></svg>
<svg x="594" y="330.6" width="52.2" height="7.2" overflow="visible" viewBox="0 0 52.200 7.200" preserveAspectRatio="none"><path d="M4.200 0H48L52.200 3V6.200c0 .6-.4 1-1 1H1c-.6 0-1-.4-1-1V3z" fill="url(#gLibBase)"/><path d="M4.200 0H48L52.200 3H0z" fill="#45b5f2"/></svg>
<svg x="600.3" y="359" width="39.600" height="44.800" overflow="visible" viewBox="0 0 39.600 44.800"><path d="M3.400 0h32.800c1.900 0 3.400 1.500 3.400 3.400V44.800H0V3.400C0 1.500 1.500 0 3.400 0z" fill="url(#gVid)"/><rect x="0" y="0" width="11.600" height="44.800" fill="#b47df5" opacity=".35"/><rect x="28" y="0" width="11.600" height="44.800" fill="#b47df5" opacity=".35"/><rect x="3.100" y="3" width="5.500" height="5.200" rx=".7" fill="#5c309f"/><rect x="31" y="3" width="5.500" height="5.200" rx=".7" fill="#5c309f"/><rect x="3.100" y="11.5" width="5.500" height="5.200" rx=".7" fill="#5c309f"/><rect x="31" y="11.5" width="5.500" height="5.200" rx=".7" fill="#5c309f"/><rect x="3.100" y="20" width="5.500" height="5.200" rx=".7" fill="#5c309f"/><rect x="31" y="20" width="5.500" height="5.200" rx=".7" fill="#5c309f"/><rect x="3.100" y="28.5" width="5.500" height="5.200" rx=".7" fill="#5c309f"/><rect x="31" y="28.5" width="5.500" height="5.200" rx=".7" fill="#5c309f"/><rect x="3.100" y="37" width="5.500" height="5.200" rx=".7" fill="#5c309f"/><rect x="31" y="37" width="5.500" height="5.200" rx=".7" fill="#5c309f"/><path d="M14 14.400c0-.7.700-1.100 1.300-.7L28 21.600c.5.300.5 1.100 0 1.400L15.300 31c-.6.400-1.300 0-1.300-.7z" fill="#f3ecfd"/></svg>
<svg x="594" y="402" width="52.2" height="7.2" overflow="visible" viewBox="0 0 52.200 7.200" preserveAspectRatio="none"><path d="M4.200 0H48L52.200 3V6.200c0 .6-.4 1-1 1H1c-.6 0-1-.4-1-1V3z" fill="url(#gLibBase)"/><path d="M4.200 0H48L52.200 3H0z" fill="#45b5f2"/></svg>
<svg x="1079" y="588" width="14" height="13" overflow="visible" viewBox="0 0 14 13" shape-rendering="crispEdges"><path d="M0 .5h14M0 4.500h14M0 8.500h14M0 12.500h14" stroke="#0a0a0a" stroke-width="1"/></svg>
<svg x="1107" y="587" width="14" height="14" overflow="visible" viewBox="0 0 14 14"><rect x=".6" y=".6" width="12.800" height="10.800" fill="none" stroke="#0a0a0a" stroke-width="1.200"/><path d="M0 13.500h14" stroke="#0a0a0a" stroke-width="1" shape-rendering="crispEdges"/></svg>
</svg>
<!-- borders -->
<div class="abs" style="left:0;top:0;width:1134px;height:1px;background:linear-gradient(90deg,#8a949c 0,#8a949c 629px,#4a6a90 635px,#44658c 765px,#2f4f7a 771px,#2f4f7a 1022px,#8d98a0 1027px)"></div><div class="abs" style="left:0;top:1px;width:1134px;height:1px;background:rgba(255,255,255,.45)"></div><div class="abs" style="left:0;top:0;width:1.100px;height:610px;background:linear-gradient(180deg,#7d8d9c 0,#7d8d9c 200px,#8a8f98 463px,#4472a8 468px,#4472a8 592px,#8a8a8a 597px)"></div><div class="abs" style="left:1132.900px;top:0;width:1.100px;height:610px;background:linear-gradient(180deg,#7f90a5 0,#7f90a5 190px,#868686 210px,#868686 446px,#2a2c48 451px)"></div><div class="abs" style="left:0;top:608.800px;width:1134px;height:1.200px;background:linear-gradient(90deg,#8a8a8a 0,#8a8a8a 18px,#3b6ea5 22px,#3b6ea5 108px,#2b2f4a 118px)"></div>
</body>
</html>
